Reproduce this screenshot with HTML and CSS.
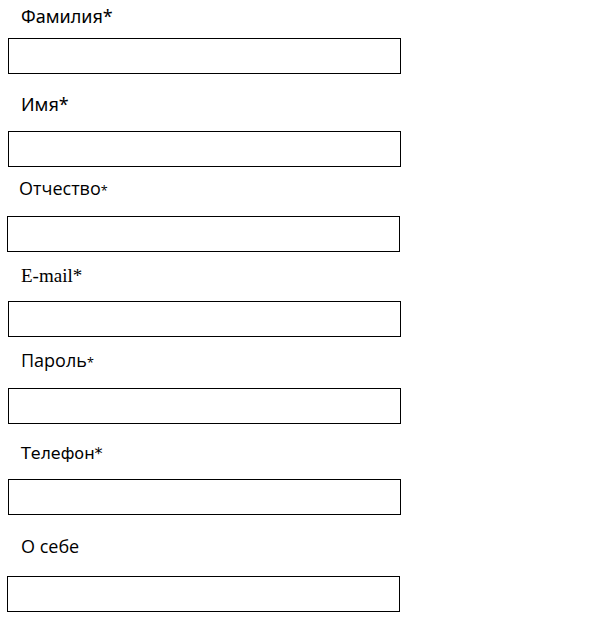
FILE: index.html
```html
<!DOCTYPE html>
<html lang="ru">
<head>
<meta charset="utf-8">
<link rel="stylesheet" href="styles.css">
</head>
<body>
<form class="form">
  <div class="field f-surname">
    <label class="label">Фамилия*</label>
    <input class="input" type="text">
  </div>
  <div class="field f-name">
    <label class="label">Имя*</label>
    <input class="input" type="text">
  </div>
  <div class="field f-patr">
    <label class="label">Отчество<span class="star">*</span></label>
    <input class="input" type="text">
  </div>
  <div class="field f-email">
    <label class="label">E-mail*</label>
    <input class="input" type="text">
  </div>
  <div class="field f-pass">
    <label class="label">Пароль<span class="star">*</span></label>
    <input class="input" type="password">
  </div>
  <div class="field f-phone">
    <label class="label">Телефон*</label>
    <input class="input" type="text">
  </div>
  <div class="field f-about">
    <label class="label">О себе</label>
    <input class="input" type="text">
  </div>
</form>
</body>
</html>
```

FILE: styles.css
```css
html, body {
  margin: 0;
  padding: 0;
  background: #fff;
}
.form {
  display: flex;
  flex-direction: column;
  padding: 0 0 0 8px;
}
.field {
  display: flex;
  flex-direction: column;
  align-items: flex-start;
}
.label {
  display: block;
  color: #000;
  padding-left: 13px;
  line-height: 1;
}
.input {
  box-sizing: border-box;
  width: 393px;
  height: 36px;
  margin: 0;
  border: 1px solid #000;
  border-radius: 0;
  padding: 0 4px;
  background: #fff;
  outline: none;
}
.star {
  font-size: 0.7em;
}

.f-surname .label { font: 18px/1 "Noto Sans", sans-serif; margin-top: 7px; }
.f-surname .input { margin-top: 13px; }

.f-name .label { font: 18px/1 "Noto Sans", sans-serif; margin-top: 21px; }
.f-name .input { margin-top: 18px; }

.f-patr { margin-left: -1px; }
.f-patr .label { font: 18px/1 "Open Sans", sans-serif; margin-top: 12px; padding-left: 12px; }
.f-patr .input { margin-top: 18px; }

.f-email .label { font: 19px/1 "Liberation Serif", serif; margin-top: 14px; }
.f-email .input { margin-top: 16px; }

.f-pass .label { font: 18px/1 "Open Sans", sans-serif; margin-top: 14px; }
.f-pass .input { margin-top: 19px; }

.f-phone .label { font: 16px/1 "DejaVu Sans", sans-serif; margin-top: 22px; }
.f-phone .input { margin-top: 17px; }

.f-about { margin-left: -1px; }
.f-about .label { font: 18px/1 "Open Sans", sans-serif; margin-top: 22px; padding-left: 14px; }
.f-about .input { margin-top: 21px; }
```
